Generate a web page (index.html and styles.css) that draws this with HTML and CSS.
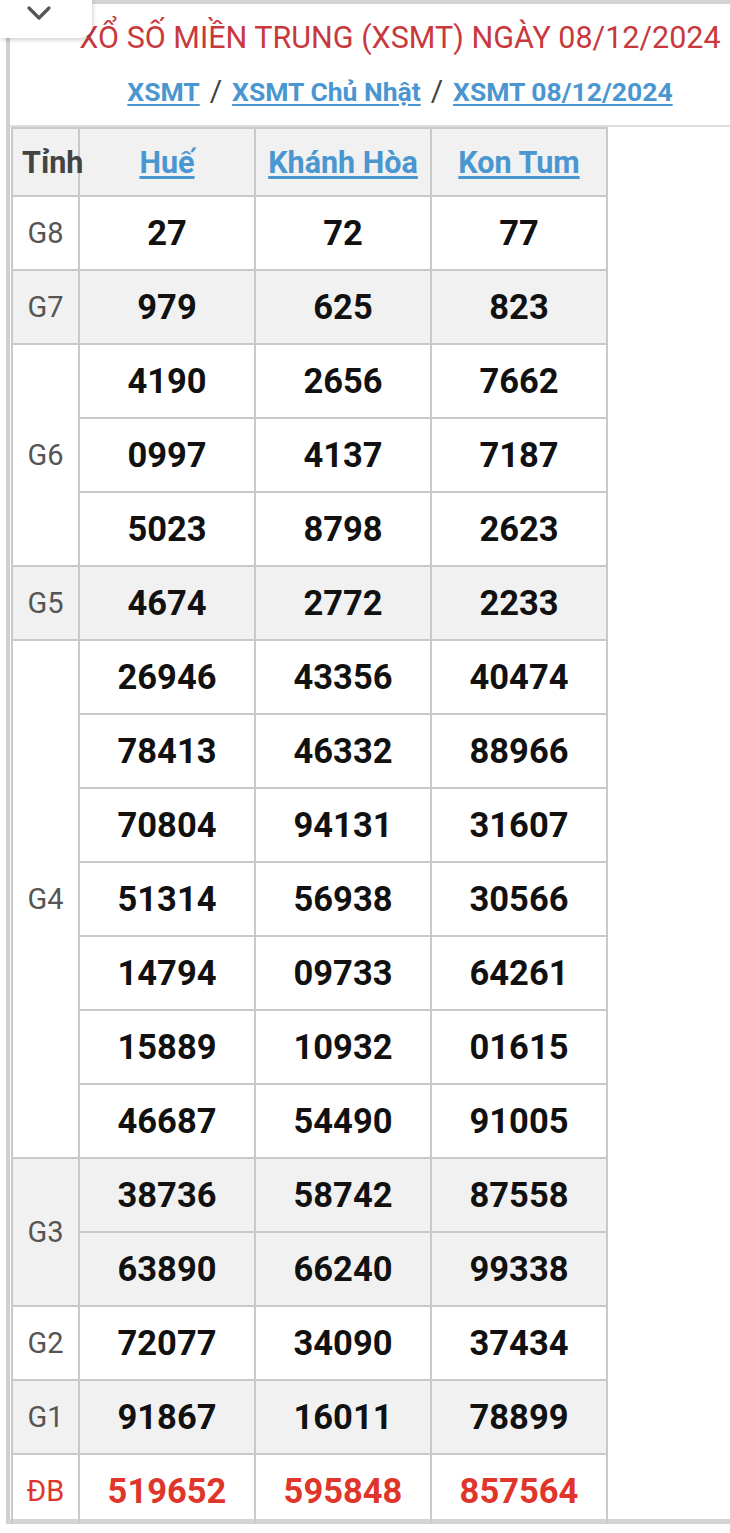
FILE: index.html
```html
<!DOCTYPE html>
<html lang="vi">
<head>
<meta charset="utf-8">
<title>XSMT 08/12/2024</title>
<link rel="stylesheet" href="styles.css">
</head>
<body>
<div class="tab">
  <svg width="26" height="16" viewBox="0 0 26 16"><path d="M3 3 L13 13 L23 3" fill="none" stroke="#555" stroke-width="3.2" stroke-linecap="round" stroke-linejoin="round"/></svg>
</div>
<div class="page">
  <div class="head">
    <h1 class="title">XỔ SỐ MIỀN TRUNG (XSMT) NGÀY 08/12/2024</h1>
    <div class="crumbs"><a href="#">XSMT</a><span class="sep">/</span><a href="#">XSMT Chủ Nhật</a><span class="sep">/</span><a href="#">XSMT 08/12/2024</a></div>
  </div>
  <table class="kq">
    <colgroup><col class="c0"><col class="c1"><col class="c1"><col class="c1"></colgroup>
    <thead>
      <tr class="hd"><th class="lbl tinh">Tỉnh</th><th><a href="#">Huế</a></th><th><a href="#">Khánh Hòa</a></th><th><a href="#">Kon Tum</a></th></tr>
    </thead>
    <tbody>
      <tr><td class="lbl">G8</td><td>27</td><td>72</td><td>77</td></tr>
      <tr class="alt"><td class="lbl">G7</td><td>979</td><td>625</td><td>823</td></tr>
      <tr><td class="lbl" rowspan="3">G6</td><td>4190</td><td>2656</td><td>7662</td></tr>
      <tr><td>0997</td><td>4137</td><td>7187</td></tr>
      <tr><td>5023</td><td>8798</td><td>2623</td></tr>
      <tr class="alt"><td class="lbl">G5</td><td>4674</td><td>2772</td><td>2233</td></tr>
      <tr><td class="lbl" rowspan="7">G4</td><td>26946</td><td>43356</td><td>40474</td></tr>
      <tr><td>78413</td><td>46332</td><td>88966</td></tr>
      <tr><td>70804</td><td>94131</td><td>31607</td></tr>
      <tr><td>51314</td><td>56938</td><td>30566</td></tr>
      <tr><td>14794</td><td>09733</td><td>64261</td></tr>
      <tr><td>15889</td><td>10932</td><td>01615</td></tr>
      <tr><td>46687</td><td>54490</td><td>91005</td></tr>
      <tr class="alt"><td class="lbl" rowspan="2">G3</td><td>38736</td><td>58742</td><td>87558</td></tr>
      <tr class="alt"><td>63890</td><td>66240</td><td>99338</td></tr>
      <tr><td class="lbl">G2</td><td>72077</td><td>34090</td><td>37434</td></tr>
      <tr class="alt"><td class="lbl">G1</td><td>91867</td><td>16011</td><td>78899</td></tr>
      <tr class="db"><td class="lbl">ĐB</td><td>519652</td><td>595848</td><td>857564</td></tr>
    </tbody>
  </table>
</div>
</body>
</html>
```

FILE: styles.css
```css
html, body {
  margin: 0;
  padding: 0;
  background: #fff;
  font-family: Roboto, "Noto Sans", Arial, sans-serif;
}

.tab {
  position: absolute;
  left: 0;
  top: 0;
  width: 92px;
  height: 38px;
  background: #fff;
  border-bottom-right-radius: 12px;
  box-shadow: 1px 2px 4px rgba(0,0,0,0.18);
  display: flex;
  justify-content: center;
  padding-right: 14px;
  box-sizing: border-box;
  align-items: flex-start;
  padding-top: 5px;
  z-index: 2;
}

.page {
  margin-left: 6px;
  border-left: 4px solid #cfcfcf;
  border-top: 4px solid #d4d4d4;
  border-bottom: 5px solid #d4d4d4;
  height: 1524px;
  box-sizing: border-box;
  background: #fff;
}

.head {
  padding-left: 60px;
  text-align: center;
  border-bottom: 2px solid #dcdcdc;
  height: 123px;
  box-sizing: border-box;
  padding-top: 15px;
}

.title {
  margin: 0;
  font-weight: 400;
  font-size: 30.5px;
  line-height: 38px;
  color: #c8393e;
  white-space: nowrap;
}

.crumbs {
  margin-top: 17px;
  font-size: 26.5px;
  line-height: 34px;
  font-weight: 700;
  white-space: nowrap;
}

.crumbs a {
  color: #4a96d0;
  text-decoration: underline;
  text-underline-offset: 3px;
}

.crumbs .sep {
  color: #444;
  font-weight: 400;
  font-size: 30px;
  margin: 0 10px;
}

.kq {
  border-collapse: collapse;
  table-layout: fixed;
  width: 597px;
  margin-left: 1px;
}

.c0 { width: 67px; }
.c1 { width: 176px; }

.kq th, .kq td {
  border: 2px solid #c9c9c9;
  text-align: center;
  vertical-align: middle;
  padding: 0;
}

.kq tr { height: 74px; }
.kq tr.hd { height: 68px; }

.hd th {
  background: #f1f1f1;
  font-size: 30.5px;
  font-weight: 700;
}

.hd th a {
  color: #4a96d0;
  text-decoration: underline;
  text-underline-offset: 3px;
}

.hd th.tinh {
  text-align: left;
  padding-left: 9px;
  color: #444;
  white-space: nowrap;
  overflow: visible;
}

.kq td {
  font-size: 34.5px;
  font-weight: 700;
  color: #111;
}

.kq td.lbl {
  font-size: 29px;
  font-weight: 400;
  color: #555;
  text-align: center;
}

.kq tr.alt td { background: #f1f1f1; }

.kq tr.db td { color: #e0352b; }
.kq tr.db td.lbl { color: #e0352b; }
```
